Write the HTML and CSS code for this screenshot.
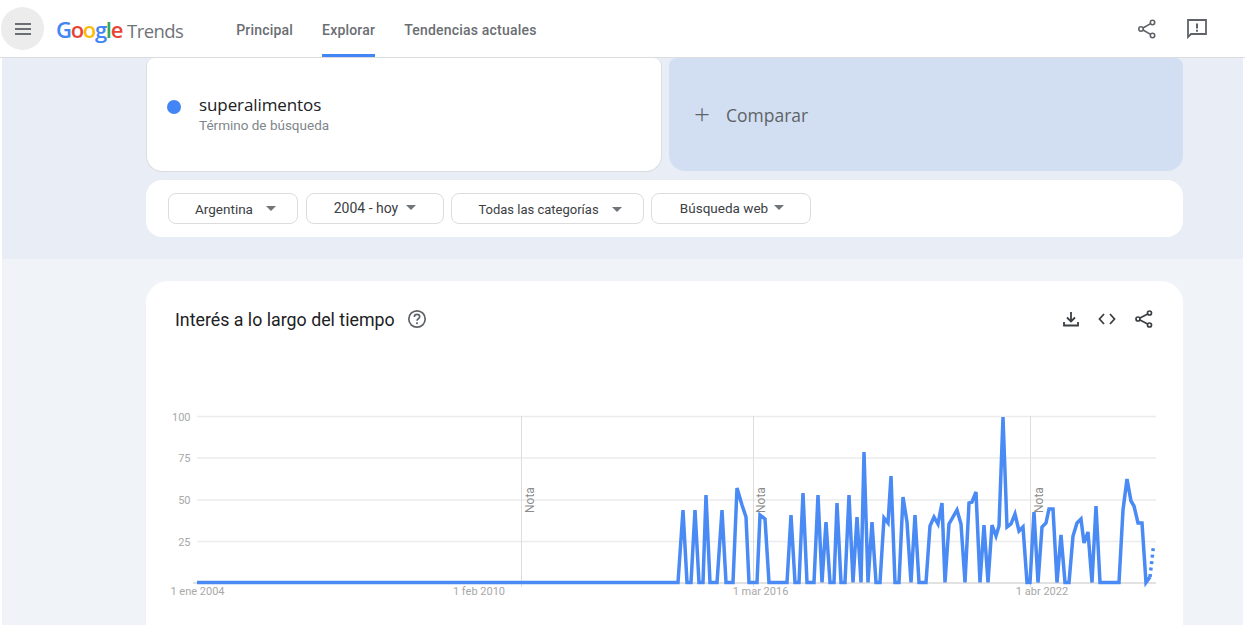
FILE: index.html
```html
<!DOCTYPE html>
<html lang="es">
<head>
    <meta charset="UTF-8">
    <meta name="viewport" content="width=device-width, initial-scale=1.0">
    <title>Google Trends</title>
    <link rel="stylesheet" href="styles.css">
</head>
<body>
    <header class="topbar">
        <div class="menu-btn">
            <svg width="16" height="12" viewBox="0 0 16 12"><path d="M0 1h16M0 6h16M0 11h16" stroke="#6b6f73" stroke-width="1.800" fill="none"/></svg>
        </div>
        <div class="logo">
            <span class="logo-google"><span class="c-blue">G</span><span class="c-red">o</span><span class="c-yellow">o</span><span class="c-blue">g</span><span class="c-green">l</span><span class="c-red">e</span></span>
            <span class="logo-trends">Trends</span>
        </div>
        <nav class="nav">
            <a class="nav-item">Principal</a>
            <a class="nav-item active">Explorar</a>
            <a class="nav-item">Tendencias actuales</a>
        </nav>
        <div class="top-icons">
            <svg width="20" height="20" viewBox="0 0 20 20" fill="none" stroke="#5f6368" stroke-width="1.600"><circle cx="15.500" cy="3.500" r="2.200"/><circle cx="4" cy="10" r="2.200"/><circle cx="15.500" cy="16.500" r="2.200"/><path d="M6 9 13.600 4.600M6 11l7.600 4.400"/></svg>
            <svg width="20" height="20" viewBox="0 0 20 20"><path d="M1 1h18v14H4l-3 3z" fill="none" stroke="#5f6368" stroke-width="1.800"/><path d="M9 4.500h2v5H9zM9 10.800h2v2H9z" fill="#5f6368"/></svg>
        </div>
    </header>

    <main class="page">
        <section class="band">
            <div class="terms">
                <div class="term-card">
                    <span class="dot"></span>
                    <div>
                        <div class="term-name">superalimentos</div>
                        <div class="term-type">Término de búsqueda</div>
                    </div>
                </div>
                <div class="compare-card">
                    <span class="plus">+</span>
                    <span>Comparar</span>
                </div>
            </div>
            <div class="filters">
                <div class="filter f-geo">Argentina <i class="caret"></i></div>
                <div class="filter f-date">2004 - hoy <i class="caret"></i></div>
                <div class="filter f-cat">Todas las categorías <i class="caret"></i></div>
                <div class="filter f-type">Búsqueda web <i class="caret"></i></div>
            </div>
        </section>

        <section class="content">
            <div class="chart-card">
                <div class="chart-head">
                    <h2>Interés a lo largo del tiempo</h2>
                    <svg class="help" width="20" height="20" viewBox="0 0 20 20" fill="none"><circle cx="10" cy="10" r="8.200" stroke="#5f6368" stroke-width="1.700"/><path d="M7.300 8c0-1.600 1.200-2.600 2.700-2.600s2.700 1 2.700 2.400c0 1.900-2.700 2-2.700 4" stroke="#5f6368" stroke-width="1.600"/><rect x="9.100" y="13.300" width="1.800" height="1.800" fill="#5f6368"/></svg>
                    <div class="chart-tools">
                        <svg width="16" height="16" viewBox="0 0 16 16" fill="none" stroke="#3c4043" stroke-width="1.800"><path d="M8 1v9M4 6.500 8 10.500 12 6.500M1 11v3.500h14V11"/></svg>
                        <svg width="18" height="12" viewBox="0 0 18 12" fill="none" stroke="#3c4043" stroke-width="1.800"><path d="M6 1 1.500 6 6 11M12 1l4.500 5L12 11"/></svg>
                        <svg width="18" height="18" viewBox="0 0 18 18" fill="none" stroke="#3c4043" stroke-width="1.700"><circle cx="14.500" cy="3" r="2"/><circle cx="3" cy="9" r="2"/><circle cx="14.500" cy="15" r="2"/><path d="M5 8 12.700 4M5 10l7.700 4"/></svg>
                    </div>
                </div>
                <svg class="chart" width="1037" height="235" viewBox="146 390 1037 235">
                    <g stroke="#ececec" stroke-width="1.300">
                        <path d="M197 416.500H1156M197 458H1156M197 500H1156M197 541.500H1156"/>
                    </g>
                    <path d="M193 583H1156" stroke="#d8d8d8" stroke-width="1.300"/>
                    <path d="M521.500 416V587M753.500 416V587M1030.500 416V587" stroke="#dcdcdc" stroke-width="1"/>
                    <g class="axis-y" text-anchor="end">
                        <text x="190.500" y="420.500">100</text>
                        <text x="190.500" y="462">75</text>
                        <text x="190.500" y="504">50</text>
                        <text x="190.500" y="545.500">25</text>
                    </g>
                    <g class="axis-x" text-anchor="middle">
                        <text x="197.500" y="595">1 ene 2004</text>
                        <text x="479" y="595">1 feb 2010</text>
                        <text x="760.500" y="595">1 mar 2016</text>
                        <text x="1042" y="595">1 abr 2022</text>
                    </g>
                    <g class="note">
                        <text transform="translate(534 513) rotate(-90)">Nota</text>
                        <text transform="translate(765 513) rotate(-90)">Nota</text>
                        <text transform="translate(1043 513) rotate(-90)">Nota</text>
                    </g>
                    <polyline class="trend" points="197,582.500 678,582.500 683,510 687,582.500 691,582.500 695,510 699,582.500 703,582.500 706,495 710,582.500 717,582.500 722,510 726,582.500 733,582.500 737,488 742,505 746,517 749,582.500 757,582.500 760,515 765,519 769,582.500 787,582.500 791,515 795,582.500 799,582.500 803,493 807,582.500 814,582.500 818,495 822,582.500 826,522 830,582.500 834,582.500 837,503 841,582.500 845,582.500 849,495 853,582.500 857,517 861,582.500 864,452 868,582.500 872,522 876,582.500 880,582.500 884,518 888,523 891,476 895,582.500 899,582.500 903,497 907,522 911,582.500 915,515 919,582.500 926,582.500 930,526 934,517 938,524 942,503 945,582.500 949,524 957,510 961,524 965,582.500 969,503 972,502 976,492 980,582.500 984,525 988,582.500 992,525 996,536 999,526 1003,417 1007,527 1011,524 1015,514 1019,531 1023,527 1027,582.500 1030,582.500 1034,512 1038,582.500 1042,527 1046,523 1049,509 1053,509 1057,582.500 1061,535 1065,582.500 1069,582.500 1073,536 1077,523 1081,519 1084,543 1088,532 1092,582.500 1096,506 1100,582.500 1119,582.500 1123,510 1127,479 1131,501 1134,506 1138,523 1142,523 1146,582.500 1150,577"/>
                    <polyline class="trend partial" points="1150,577 1153.500,546"/>
                </svg>
            </div>
        </section>
    </main>
</body>
</html>
```

FILE: styles.css
```css
* {
    box-sizing: border-box;
}
html, body {
    height: 100%;
}
body {
    margin: 0;
    background-color: #fff;
    font-family: Roboto, "Liberation Sans", sans-serif;
    overflow: hidden;
}
.topbar {
    display: flex;
    align-items: center;
    height: 58px;
    padding-left: 1px;
    background-color: #fff;
    border-bottom: 1px solid #dadce0;
}
.menu-btn {
    display: flex;
    align-items: center;
    justify-content: center;
    width: 43px;
    height: 43px;
    border-radius: 50%;
    background-color: #ececec;
}
.logo {
    display: flex;
    align-items: baseline;
    gap: 5px;
    margin-left: 12px;
}
.logo-google {
    font-family: "Open Sans", sans-serif;
    font-weight: 600;
    font-size: 22px;
    letter-spacing: -1.300px;
}
.logo-trends {
    font-family: "Open Sans", sans-serif;
    font-size: 18.500px;
    letter-spacing: -0.600px;
    color: #6f7377;
}
.c-blue { color: #4285f4; }
.c-red { color: #ea4335; }
.c-yellow { color: #fbbc05; }
.c-green { color: #34a853; }
.nav {
    display: flex;
    height: 57px;
    gap: 29px;
    margin-left: 53px;
}
.nav-item {
    display: flex;
    align-items: center;
    padding-top: 5px;
    font-size: 14px;
    font-weight: 500;
    letter-spacing: 0.200px;
    color: #6a6e72;
    border-bottom: 3px solid transparent;
}
.nav-item.active {
    border-bottom-color: #4285f4;
}
.top-icons {
    display: flex;
    align-items: center;
    gap: 30px;
    margin-left: auto;
    margin-right: 38px;
}
.page {
    padding: 0 2px;
}
.band {
    height: 201px;
    padding: 0 60px 0 144px;
    background-color: #e8edf6;
}
.terms {
    display: flex;
    gap: 7px;
    height: 113px;
}
.term-card {
    display: flex;
    align-items: center;
    gap: 18px;
    width: 516px;
    height: 114px;
    padding: 0 20px 16px;
    background-color: #fff;
    border: 1px solid #dadce0;
    border-top: none;
    border-radius: 8px 8px 16px 16px;
}
.dot {
    width: 14px;
    height: 14px;
    border-radius: 50%;
    background-color: #4285f4;
}
.term-name {
    margin-top: 12px;
    font-family: "Open Sans", sans-serif;
    font-size: 17px;
    line-height: 24px;
    letter-spacing: -0.100px;
    color: #202124;
}
.term-type {
    font-size: 13.500px;
    color: #80868b;
}
.compare-card {
    display: flex;
    align-items: center;
    gap: 16px;
    flex: 1;
    height: 113px;
    padding: 0 25px;
    font-family: "Open Sans", sans-serif;
    font-size: 17.500px;
    color: #5f6368;
    background-color: #d2dff2;
    border-radius: 8px 8px 16px 16px;
}
.plus {
    font-size: 28px;
    font-weight: 300;
    line-height: 1;
    margin-top: -3px;
}
.filters {
    display: flex;
    align-items: center;
    gap: 7px;
    height: 57px;
    margin-top: 9px;
    padding: 0 22px;
    background-color: #fff;
    border-radius: 16px;
}
.filter {
    display: flex;
    align-items: center;
    justify-content: center;
    gap: 13px;
    height: 31px;
    font-size: 13.500px;
    color: #3c4043;
    border: 1px solid #dadce0;
    border-radius: 8px;
}
.f-geo { width: 130px; margin-right: 1px; padding-left: 5px; }
.f-date { width: 138px; font-size: 14px; gap: 8px; padding-bottom: 2px; }
.f-cat { width: 193px; font-size: 13px; padding: 2px 0 0 5px; }
.f-type { width: 160px; gap: 6px; padding: 0 0 2px 2px; }
.caret {
    width: 0;
    height: 0;
    border-left: 5px solid transparent;
    border-right: 5px solid transparent;
    border-top: 5px solid #70757a;
}
.content {
    padding: 22px 60px 0 144px;
    height: 366px;
    background-color: #f0f4f9;
}
.chart-card {
    height: 344px;
    padding-top: 27px;
    overflow: hidden;
    background-color: #fff;
    border-radius: 22px 22px 0 0;
}
.chart-head {
    display: flex;
    align-items: center;
    height: 22px;
    padding: 0 30px 0 29px;
}
.chart-head h2 {
    margin: 0;
    font-size: 17.800px;
    font-weight: 400;
    color: #202124;
}
.help {
    margin-left: 12px;
}
.chart-tools {
    display: flex;
    align-items: center;
    gap: 19px;
    margin-left: auto;
}
.chart {
    display: block;
    margin-top: 60px;
}
.axis-y text, .axis-x text {
    font-size: 11px;
    fill: #a8a8a8;
}
.note text {
    font-size: 12px;
    fill: #8c8c8c;
}
.trend {
    fill: none;
    stroke: #4a8af4;
    stroke-width: 3.500;
    stroke-linejoin: miter;
}
.trend.partial {
    stroke-dasharray: 3 3.500;
}
```
